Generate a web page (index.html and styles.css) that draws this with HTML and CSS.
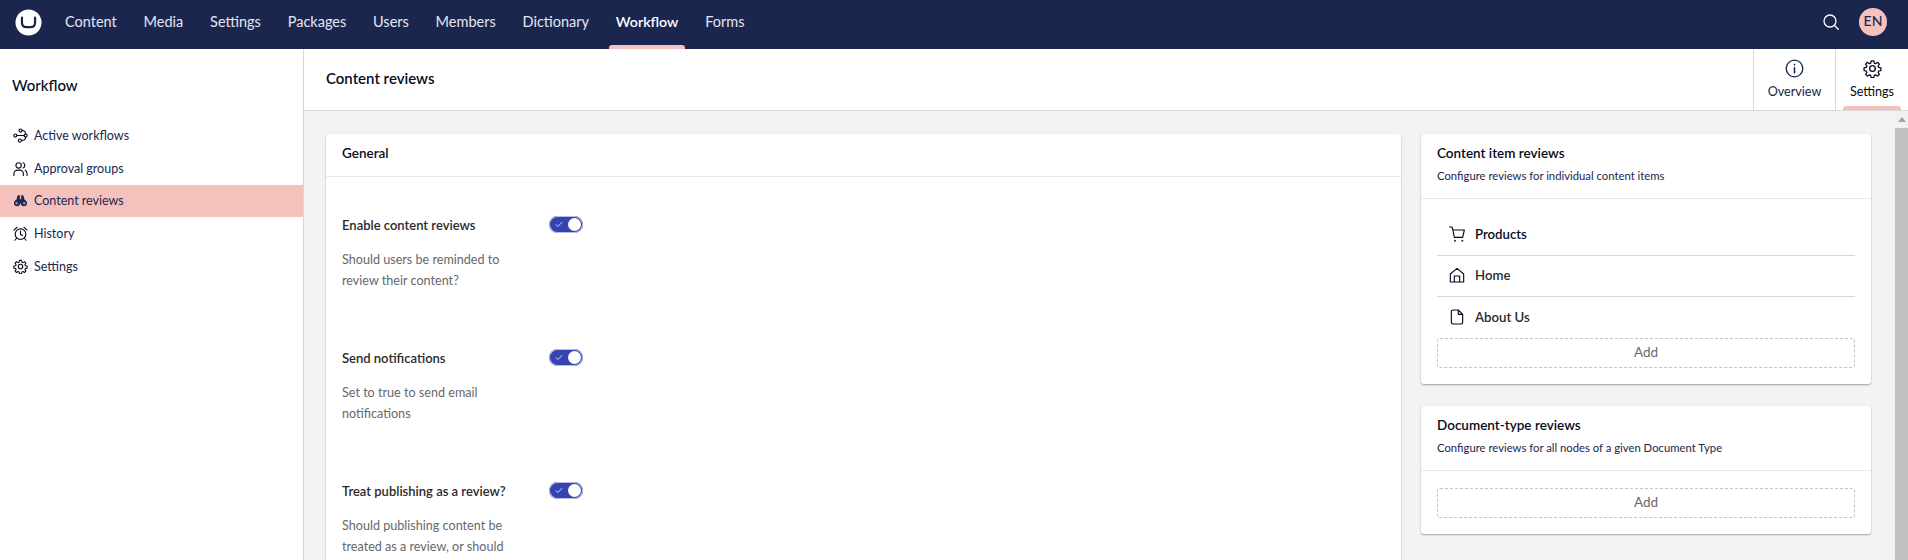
FILE: index.html
```html
<!DOCTYPE html>
<html lang="en">
<head>
    <meta charset="UTF-8">
    <meta name="viewport" content="width=device-width, initial-scale=1.0">
    <title>Content reviews</title>
    <link rel="stylesheet" href="styles.css">
</head>
<body>
    <header class="topbar">
        <svg class="logo" viewBox="0 0 28 28"><circle cx="14" cy="14" r="13.5" fill="#fff"/><path d="M7.200 9v5c0 3 1.900 4.800 4.600 4.800h4.400c2.700 0 4.600-1.800 4.600-4.800V9" fill="none" stroke="#1b264f" stroke-width="2.300" stroke-linecap="round"/></svg>
        <nav class="sections">
            <a>Content</a>
            <a>Media</a>
            <a>Settings</a>
            <a>Packages</a>
            <a>Users</a>
            <a>Members</a>
            <a>Dictionary</a>
            <a class="active">Workflow</a>
            <a>Forms</a>
        </nav>
        <div class="topbar-tools">
            <svg class="search" viewBox="0 0 16 16" fill="none" stroke="#fff" stroke-width="1.300" stroke-linecap="round"><circle cx="7" cy="7" r="6"/><path d="M11.500 11.500l3.800 3.800"/></svg>
            <span class="avatar">EN</span>
        </div>
    </header>

    <div class="layout">
        <aside class="sidebar">
            <h2>Workflow</h2>
            <ul class="tree">
                <li>
                    <svg class="icon" viewBox="0 0 24 24"><circle cx="3.800" cy="12" r="2.500"/><circle cx="12" cy="4" r="2.500"/><circle cx="20.200" cy="12" r="2.500"/><circle cx="11" cy="20" r="2.500"/><path d="M6.300 12h11.400M14.500 4c3.400 0 5.700 2.300 5.700 5.500M13.500 20c3.900 0 6.700-2.300 6.700-5.500"/></svg>
                    Active workflows
                </li>
                <li>
                    <svg class="icon" viewBox="0 0 24 24"><circle cx="9" cy="7" r="4.300"/><path d="M1.500 23v-3c0-3 2.500-5.500 5.500-5.500h4c3 0 5.500 2.500 5.500 5.500v3M16 2.800c1.800.6 3 2.300 3 4.200s-1.200 3.600-3 4.200M19.500 14.700c1.800.9 3 2.800 3 5.100V23"/></svg>
                    Approval groups
                </li>
                <li class="selected">
                    <svg class="icon" viewBox="0 0 24 24"><path class="solid" d="M7.500 3.500h3.500v6.500h2V3.500h3.500l1.800 7c2.400 1.200 4.200 3.200 4.200 5.800 0 2.900-2.300 4.700-5 4.700s-5-1.900-5-4.700h-1c0 2.800-2.300 4.700-5 4.700s-5-1.800-5-4.700c0-2.600 1.800-4.600 4.200-5.800z"/><circle class="hole" cx="6" cy="16.300" r="2.300"/><circle class="hole" cx="18" cy="16.300" r="2.300"/></svg>
                    Content reviews
                </li>
                <li>
                    <svg class="icon" viewBox="0 0 24 24"><circle cx="12" cy="13" r="8.500"/><path d="M12 8v5.500l3 1.500M1.500 6.500L6.500 2M22.500 6.500l-5-4.500M5.500 20L3 22.800M18.500 20l2.500 2.800"/></svg>
                    History
                </li>
                <li>
                    <svg class="icon" viewBox="0 0 24 24"><use href="#gear"/></svg>
                    Settings
                </li>
            </ul>
        </aside>

        <main class="main">
            <div class="main-head">
                <h1>Content reviews</h1>
                <div class="views">
                    <a class="view overview">
                        <svg class="view-icon" viewBox="0 0 24 24"><circle cx="12" cy="12" r="10.500"/><path d="M12 11v6.500M12 7v.6" stroke-width="2"/></svg>
                        Overview
                    </a>
                    <a class="view current">
                        <svg class="view-icon" viewBox="0 0 24 24"><use href="#gear"/></svg>
                        Settings
                    </a>
                </div>
            </div>

            <div class="scroll-area">
                <div class="panels">
                    <section class="card general">
                        <h3 class="general-title">General</h3>
                        <div class="fields">
                            <div class="field">
                                <div class="field-info">
                                    <label>Enable content reviews</label>
                                    <p>Should users be reminded to review their content?</p>
                                </div>
                                <span class="toggle"><svg viewBox="0 0 10 8"><path d="M1 4l2.500 2.500L9 1"/></svg></span>
                            </div>
                            <div class="field">
                                <div class="field-info">
                                    <label>Send notifications</label>
                                    <p>Set to true to send email notifications</p>
                                </div>
                                <span class="toggle"><svg viewBox="0 0 10 8"><path d="M1 4l2.500 2.500L9 1"/></svg></span>
                            </div>
                            <div class="field">
                                <div class="field-info">
                                    <label>Treat publishing as a review?</label>
                                    <p>Should publishing content be treated as a review, or should</p>
                                </div>
                                <span class="toggle"><svg viewBox="0 0 10 8"><path d="M1 4l2.500 2.500L9 1"/></svg></span>
                            </div>
                        </div>
                    </section>

                    <div class="side-cards">
                        <section class="card">
                            <div class="card-head">
                                <h3>Content item reviews</h3>
                                <small>Configure reviews for individual content items</small>
                            </div>
                            <div class="card-body items-body">
                                <div class="item first">
                                    <svg class="icon" viewBox="0 0 24 24"><path d="M1 1.500h3.500L5.800 6 8 17h12.500L23 6H5.800"/><circle class="solid" cx="9" cy="22" r="1.500"/><circle class="solid" cx="20" cy="22" r="1.500"/></svg>
                                    Products
                                </div>
                                <div class="item">
                                    <svg class="icon" viewBox="0 0 24 24"><path d="M2 22.500V10.500L12 2l10 8.500v12zM8 22.500V13.500h8v9"/></svg>
                                    Home
                                </div>
                                <div class="item last">
                                    <svg class="icon" viewBox="0 0 24 24"><path d="M14 1.500H6a2.500 2.500 0 0 0-2.500 2.500v16A2.500 2.500 0 0 0 6 22.500h12a2.500 2.500 0 0 0 2.500-2.500V8zM14 1.500V8h6.500"/></svg>
                                    About Us
                                </div>
                                <button class="add">Add</button>
                            </div>
                        </section>

                        <section class="card">
                            <div class="card-head">
                                <h3>Document-type reviews</h3>
                                <small>Configure reviews for all nodes of a given Document Type</small>
                            </div>
                            <div class="card-body">
                                <button class="add">Add</button>
                            </div>
                        </section>
                    </div>
                </div>
                <div class="scrollbar">
                    <span class="arrow"></span>
                    <span class="thumb"></span>
                </div>
            </div>
        </main>
    </div>

    <svg class="defs" width="0" height="0">
        <symbol id="gear" viewBox="0 0 24 24">
            <path d="M10.200 1.500h3.600l.6 3.100 1.900.8 2.600-1.800 2.500 2.500-1.800 2.600.8 1.900 3.100.6v3.600l-3.100.6-.8 1.900 1.800 2.600-2.500 2.500-2.600-1.800-1.900.8-.6 3.100h-3.600l-.6-3.100-1.900-.8-2.600 1.800-2.500-2.500 1.800-2.600-.8-1.900-3.100-.6v-3.600l3.100-.6.8-1.900-1.800-2.600 2.500-2.500 2.600 1.800 1.900-.8z" transform="translate(12 12) scale(.93) translate(-12 -12)"/>
            <circle cx="12" cy="12" r="3.600"/>
        </symbol>
    </svg>
</body>
</html>
```

FILE: styles.css
```css
* {
    box-sizing: border-box;
}
html, body {
    height: 100%;
}
body {
    margin: 0;
    overflow: hidden;
    display: flex;
    flex-direction: column;
    font-family: Lato, "Open Sans", sans-serif;
    font-size: 14px;
    color: #060b1c;
    background: #fff;
}
h1, h2, h3, p, ul {
    margin: 0;
    padding: 0;
}

/* top bar */
.topbar {
    flex: 0 0 49px;
    display: flex;
    align-items: center;
    background: #1b264f;
    padding: 0 21px 0 15px;
}
.logo {
    width: 27px;
    height: 27px;
    margin-top: -5px;
}
.sections {
    display: flex;
    align-self: stretch;
    margin-left: 16px;
}
.sections a {
    position: relative;
    display: block;
    padding: 13px 7px 0;
    margin-right: 12.800px;
    font-size: 14.500px;
    color: #e3e6f1;
}
.sections a.active {
    color: #fff;
    font-size: 14.200px;
    font-weight: 600;
}
.sections a.active::after {
    content: "";
    position: absolute;
    left: 0;
    right: 0;
    bottom: 0;
    height: 4px;
    border-radius: 3px 3px 0 0;
    background: #f5c1bc;
}
.topbar-tools {
    margin-left: auto;
    display: flex;
    align-items: center;
    gap: 20px;
    margin-top: -5px;
}
.search {
    width: 16px;
    height: 16px;
}
.avatar {
    width: 28px;
    height: 28px;
    border-radius: 50%;
    background: #f5c1bc;
    color: #1b264f;
    font-size: 14px;
    font-weight: 500;
    line-height: 25px;
    text-align: center;
}

/* page */
.layout {
    flex: 1;
    display: flex;
    min-height: 0;
}
.sidebar {
    flex: 0 0 304px;
    border-right: 1px solid #d8d7d9;
    background: #fff;
}
.sidebar h2 {
    font-size: 15px;
    font-weight: 500;
    line-height: 20px;
    padding: 26px 12px 0;
}
.tree {
    list-style: none;
    margin-top: 24.500px;
}
.tree li {
    display: flex;
    align-items: center;
    gap: 6px;
    height: 32.600px;
    padding-left: 13px;
    font-size: 12.500px;
    color: #1b264f;
}
.tree li.selected {
    background: #f5c1bc;
}
.icon {
    flex: none;
    width: 15px;
    height: 15px;
    fill: none;
    stroke: #060b1c;
    stroke-width: 1.800;
    stroke-linecap: round;
    stroke-linejoin: round;
}
.icon .solid {
    fill: #1b264f;
    stroke: none;
}
.icon .hole {
    fill: #7d7f9e;
    stroke: none;
}
.defs {
    position: absolute;
}

.main {
    flex: 1;
    min-width: 0;
    display: flex;
    flex-direction: column;
    background: #f3f3f5;
}
.main-head {
    flex: 0 0 62px;
    display: flex;
    align-items: stretch;
    justify-content: space-between;
    background: #fff;
    border-bottom: 1px solid #d8d7d9;
}
.main-head h1 {
    font-size: 15px;
    font-weight: 600;
    line-height: 20px;
    padding: 19px 0 0 22px;
}
.views {
    display: flex;
}
.view {
    position: relative;
    width: 82px;
    display: flex;
    flex-direction: column;
    align-items: center;
    padding-top: 10px;
    gap: 6px;
    font-size: 12.600px;
    color: #1b264f;
    border-left: 1px solid #d8d7d9;
}
.view.current {
    width: 73px;
    color: #060b1c;
}
.view.current::after {
    content: "";
    position: absolute;
    left: 7px;
    right: 7px;
    bottom: 0;
    height: 4px;
    border-radius: 3px 3px 0 0;
    background: #f5c1bc;
}
.view-icon {
    width: 19px;
    height: 19px;
    fill: none;
    stroke: #060b1c;
    stroke-width: 1.700;
    stroke-linecap: round;
    stroke-linejoin: round;
}
.overview .view-icon {
    stroke: #1b264f;
}

.scroll-area {
    flex: 1;
    min-height: 0;
    display: flex;
}
.panels {
    flex: 1;
    min-width: 0;
    display: flex;
    align-items: flex-start;
    gap: 20px;
    padding: 23px 24px 0 22px;
    overflow: hidden;
}
.scrollbar {
    flex: 0 0 13px;
    display: flex;
    flex-direction: column;
    background: #f1f1f1;
}
.arrow {
    height: 17px;
    position: relative;
}
.arrow::before {
    content: "";
    position: absolute;
    left: 3px;
    top: 6px;
    border: 4px solid transparent;
    border-top: 0;
    border-bottom: 5px solid #a3a3a3;
}
.thumb {
    flex: 1;
    background: #c1c1c1;
}

/* cards */
.card {
    background: #fff;
    border-radius: 3px;
    box-shadow: 0 1px 2px rgba(0, 0, 0, .35);
}
.card h3 {
    font-size: 13.500px;
    font-weight: 600;
    line-height: 18px;
}
.general {
    flex: 0 0 1075px;
    height: 560px;
}
.card .general-title {
    padding: 10px 16px;
    height: 43px;
    font-size: 13.500px;
    border-bottom: 1px solid #e9e9eb;
}
.fields {
    padding: 39px 16px 0;
}
.field {
    display: flex;
    height: 133px;
    gap: 37px;
}
.field-info {
    width: 170px;
}
.field label {
    display: block;
    font-size: 13px;
    font-weight: 600;
    line-height: 18px;
    color: #2b2b2b;
}
.field p {
    margin-top: 14.500px;
    font-size: 12.600px;
    line-height: 21.500px;
    color: #68676b;
}
.toggle {
    flex: none;
    position: relative;
    width: 34px;
    height: 17px;
    border-radius: 9px;
    background: #3544b1;
    box-shadow: 0 0 0 1px #b9bfe3 inset;
}
.toggle svg {
    position: absolute;
    left: 6px;
    top: 5px;
    width: 8px;
    height: 7px;
    fill: none;
    stroke: #d8dcec;
    stroke-width: 1.200;
}
.toggle::after {
    content: "";
    position: absolute;
    right: 2px;
    top: 2px;
    width: 13px;
    height: 13px;
    border-radius: 50%;
    background: #fff;
}
.side-cards {
    flex: 0 0 450px;
    display: flex;
    flex-direction: column;
    gap: 22px;
}
.card-head {
    padding: 10px 16px 0;
    height: 65px;
    border-bottom: 1px solid #e9e9eb;
}
.card-head small {
    display: block;
    margin-top: 5.500px;
    font-size: 11.300px;
    line-height: 15px;
    color: #1b264f;
}
.card-body {
    padding: 17px 16px 16px;
}
.items-body {
    padding-top: 15px;
}
.item {
    display: flex;
    align-items: center;
    gap: 10px;
    height: 41px;
    padding: 0 0 2px 12px;
    font-size: 13.200px;
    font-weight: 600;
    color: #2b2b2b;
    border-bottom: 1px solid #d8d7d9;
}
.item.first {
    height: 42px;
    color: #060b1c;
}
.item .icon {
    width: 16px;
    height: 16px;
    stroke-width: 1.700;
}
.item.last {
    border-bottom: 0;
}
.add {
    display: block;
    width: 100%;
    height: 30px;
    padding: 0 0 2px;
    border: 1px dashed #c4c4c4;
    border-radius: 3px;
    background: none;
    font-family: inherit;
    font-size: 13.500px;
    color: #68676b;
}
```
